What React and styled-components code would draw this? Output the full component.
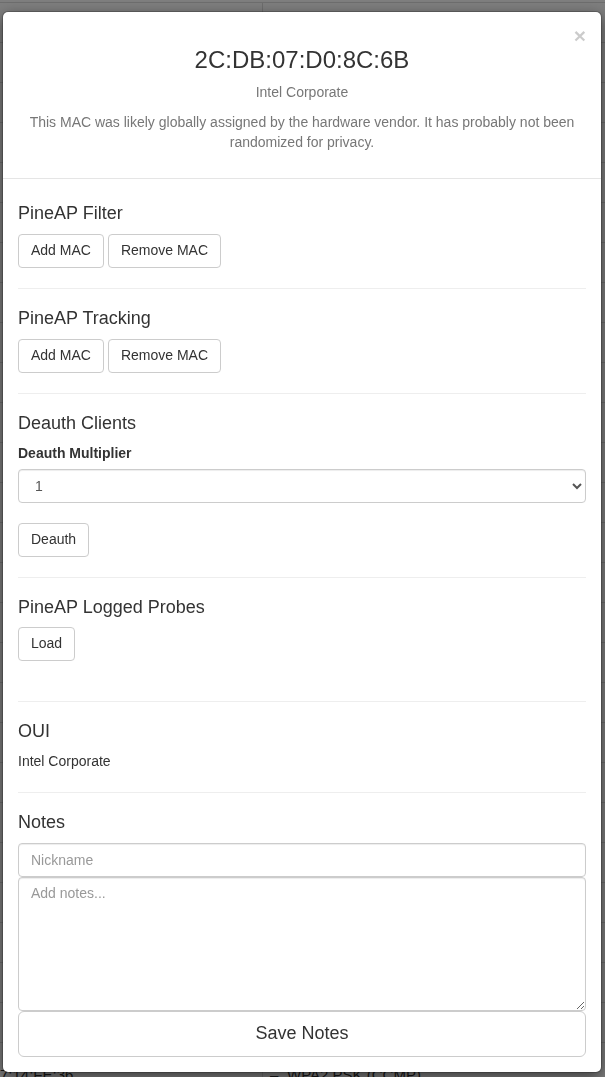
import React from 'react';
import styled, { createGlobalStyle } from 'styled-components';

const GlobalStyle = createGlobalStyle`
    html, body {
        margin: 0;
        padding: 0;
        background: #fff;
    }
    body {
        font-family: "Liberation Sans", Arial, Helvetica, sans-serif;
        font-size: 14px;
        line-height: 1.42857;
        color: #333;
        overflow: hidden;
    }
    * {
        box-sizing: border-box;
    }
`;

// rows of the table that sits behind the modal, mostly hidden by it
const backgroundRows = [
    ...Array.from({ length: 26 }, () => ['', '', '']),
    ['7:14:FE:36', '–', 'WPA2 PSK (CCMP)'],
];

export default function App() {
    return (
        <>
            <GlobalStyle />
            <Page>
                {backgroundRows.map((row, i) => (
                    <TableRow key={i}>
                        <Cell>{row[0]}</Cell>
                        <Cell $bordered>{row[1]}</Cell>
                        <Cell>{row[2]}</Cell>
                    </TableRow>
                ))}
            </Page>
            <Backdrop />
            <ModalWrap>
                <Dialog>
                    <Header>
                        <Close type="button">×</Close>
                        <Title>2C:DB:07:D0:8C:6B</Title>
                        <Muted>Intel Corporate</Muted>
                        <Muted>
                            This MAC was likely globally assigned by the hardware vendor. It has probably not been randomized for privacy.
                        </Muted>
                    </Header>
                    <Body>
                        <SectionTitle>PineAP Filter</SectionTitle>
                        <ButtonRow>
                            <Button>Add MAC</Button>
                            <Button>Remove MAC</Button>
                        </ButtonRow>
                        <Rule />

                        <SectionTitle>PineAP Tracking</SectionTitle>
                        <ButtonRow>
                            <Button>Add MAC</Button>
                            <Button>Remove MAC</Button>
                        </ButtonRow>
                        <Rule />

                        <SectionTitle>Deauth Clients</SectionTitle>
                        <FormGroup>
                            <Label>Deauth Multiplier</Label>
                            <Select defaultValue="1">
                                {[1, 2, 3, 4, 5, 6, 7, 8, 9, 10].map((n) => (
                                    <option key={n} value={n}>{n}</option>
                                ))}
                            </Select>
                        </FormGroup>
                        <ButtonRow>
                            <Button>Deauth</Button>
                        </ButtonRow>
                        <Rule />

                        <SectionTitle>PineAP Logged Probes</SectionTitle>
                        <ButtonRow $spaced>
                            <Button>Load</Button>
                        </ButtonRow>
                        <Rule />

                        <SectionTitle>OUI</SectionTitle>
                        <Text>Intel Corporate</Text>
                        <Rule />

                        <SectionTitle>Notes</SectionTitle>
                        <Input placeholder="Nickname" />
                        <TextArea rows={6} placeholder="Add notes..." />
                        <BlockButton>Save Notes</BlockButton>
                    </Body>
                </Dialog>
            </ModalWrap>
        </>
    );
}

const Page = styled.div`
    padding-top: 2px;
`;

const TableRow = styled.div`
    display: grid;
    grid-template-columns: 262px 25px 1fr;
    height: 40px;
    border-top: 1px solid #ddd;
`;

const Cell = styled.div`
    display: flex;
    align-items: flex-end;
    font-size: 15px;
    line-height: 14px;
    color: #333;
    border-left: ${(p) => (p.$bordered ? '1px solid #ddd' : 'none')};
    padding-left: ${(p) => (p.$bordered ? '7px' : '0')};
    overflow: hidden;
    white-space: nowrap;
`;

const Backdrop = styled.div`
    position: fixed;
    inset: 0;
    background: rgba(0, 0, 0, 0.5);
`;

const ModalWrap = styled.div`
    position: fixed;
    inset: 0;
    overflow: hidden;
`;

const Dialog = styled.div`
    margin: 11px 3px 0 2px;
    background: #fff;
    border: 1px solid rgba(0, 0, 0, 0.2);
    border-radius: 6px;
    box-shadow: 0 5px 15px rgba(0, 0, 0, 0.5);
    background-clip: padding-box;
`;

const Header = styled.div`
    position: relative;
    padding: 15px;
    text-align: center;
    border-bottom: 1px solid #e5e5e5;
`;

const Close = styled.button`
    position: absolute;
    top: 13px;
    right: 15px;
    padding: 0;
    border: 0;
    background: transparent;
    font-family: "Liberation Sans", Arial, sans-serif;
    font-size: 21px;
    font-weight: bold;
    line-height: 1;
    color: #000;
    opacity: 0.2;
    cursor: pointer;
`;

const Title = styled.h3`
    margin: 20px 0 10px;
    font-size: 24px;
    font-weight: 500;
    line-height: 1.1;
    color: #333;
`;

const Muted = styled.p`
    margin: 0 0 10px;
    color: #777;
`;

const Body = styled.div`
    padding: 15px;
`;

const SectionTitle = styled.h4`
    margin: 10px 0;
    font-size: 18px;
    font-weight: 500;
    line-height: 1.1;
    color: #333;
`;

const ButtonRow = styled.div`
    display: flex;
    gap: 4px;
    padding-bottom: ${(p) => (p.$spaced ? '20px' : '0')};
`;

const Button = styled.button`
    display: inline-block;
    padding: 6px 12px;
    font-family: "Liberation Sans", Arial, sans-serif;
    font-size: 14px;
    line-height: 1.42857;
    color: #333;
    background: #fff;
    border: 1px solid #ccc;
    border-radius: 4px;
    cursor: pointer;
`;

const BlockButton = styled(Button)`
    display: block;
    width: 100%;
    padding: 10px 16px;
    font-size: 18px;
    line-height: 1.3333;
    border-radius: 6px;
`;

const Rule = styled.hr`
    margin: 20px 0;
    border: 0;
    border-top: 1px solid #eee;
`;

const FormGroup = styled.div`
    margin-bottom: 20px;
`;

const Label = styled.label`
    display: block;
    margin-bottom: 5px;
    font-weight: bold;
`;

const fieldStyles = `
    display: block;
    width: 100%;
    padding: 6px 12px;
    font-family: "Liberation Sans", Arial, sans-serif;
    font-size: 14px;
    line-height: 1.42857;
    color: #555;
    background: #fff;
    border: 1px solid #ccc;
    border-radius: 4px;
    box-shadow: inset 0 1px 1px rgba(0, 0, 0, 0.075);
    &::placeholder {
        color: #999;
    }
`;

const Select = styled.select`
    ${fieldStyles}
    height: 34px;
`;

const Input = styled.input`
    ${fieldStyles}
    height: 34px;
`;

const TextArea = styled.textarea`
    ${fieldStyles}
    height: 134px;
    resize: vertical;
`;

const Text = styled.p`
    margin: 0 0 10px;
`;
